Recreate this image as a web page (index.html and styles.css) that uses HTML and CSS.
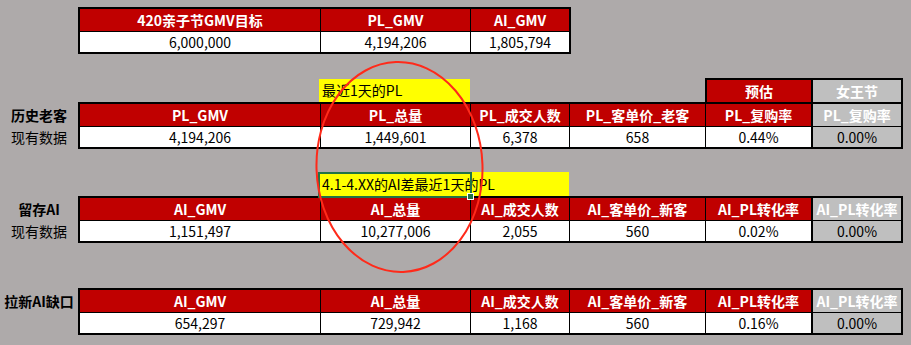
FILE: index.html
```html
<!DOCTYPE html>
<html lang="zh-CN">
<head>
<meta charset="utf-8">
<title>420亲子节GMV</title>
<link rel="stylesheet" href="styles.css">
</head>
<body>
<div class="sheet">
  <section class="block top">
    <div class="tbl t3">
      <div class="h">420亲子节GMV目标</div><div class="h">PL_GMV</div><div class="h">AI_GMV</div>
      <div class="d">6,000,000</div><div class="d">4,194,206</div><div class="d">1,805,794</div>
    </div>
  </section>

  <section class="block b1">
    <div class="notes n-a">
      <div class="sp"></div>
      <div class="note">最近1天的PL</div>
      <div class="sp"></div>
      <div class="tagbox"><div class="tag red">预估</div><div class="tag gray">女王节</div></div>
    </div>
    <div class="row">
      <div class="labels"><div class="lab strong">历史老客</div><div class="lab">现有数据</div></div>
      <div class="tbl t6">
        <div class="h">PL_GMV</div><div class="h">PL_总量</div><div class="h">PL_成交人数</div><div class="h">PL_客单价_老客</div><div class="h">PL_复购率</div><div class="h g">PL_复购率</div>
        <div class="d">4,194,206</div><div class="d">1,449,601</div><div class="d">6,378</div><div class="d">658</div><div class="d">0.44%</div><div class="d g">0.00%</div>
      </div>
    </div>
  </section>

  <section class="block b2">
    <div class="notes n-b">
      <div class="sp"></div>
      <div class="note wide">4.1-4.XX的AI差最近1天的PL<span class="sel"></span><span class="handle"></span></div>
    </div>
    <div class="row">
      <div class="labels"><div class="lab strong">留存AI</div><div class="lab">现有数据</div></div>
      <div class="tbl t6">
        <div class="h">AI_GMV</div><div class="h">AI_总量</div><div class="h">AI_成交人数</div><div class="h">AI_客单价_新客</div><div class="h">AI_PL转化率</div><div class="h g">AI_PL转化率</div>
        <div class="d">1,151,497</div><div class="d">10,277,006</div><div class="d">2,055</div><div class="d">560</div><div class="d">0.02%</div><div class="d g">0.00%</div>
      </div>
    </div>
  </section>

  <section class="block b3">
    <div class="row">
      <div class="labels"><div class="lab strong">拉新AI缺口</div><div class="lab"></div></div>
      <div class="tbl t6">
        <div class="h">AI_GMV</div><div class="h">AI_总量</div><div class="h">AI_成交人数</div><div class="h">AI_客单价_新客</div><div class="h">AI_PL转化率</div><div class="h g">AI_PL转化率</div>
        <div class="d">654,297</div><div class="d">729,942</div><div class="d">1,168</div><div class="d">560</div><div class="d">0.16%</div><div class="d g">0.00%</div>
      </div>
    </div>
  </section>

  <svg class="circle" width="180" height="220" viewBox="310 57 180 220" aria-hidden="true">
    <ellipse cx="399.5" cy="167" rx="83" ry="105" transform="rotate(-2 399.5 167)" fill="none" stroke="#ff2a1a" stroke-width="2"/>
  </svg>
</div>
</body>
</html>
```

FILE: styles.css
```css
* { box-sizing: border-box; }
html, body { margin: 0; padding: 0; }
body {
  background: #aeaaaa;
  font-family: "Noto Sans CJK SC", "Noto Sans", sans-serif;
  font-size: 14px;
  color: #000;
  width: 911px;
  height: 345px;
  overflow: hidden;
}
.sheet {
  position: relative;
  padding-top: 7px;
}
.block { display: block; }
.top { padding-left: 78px; }
.b1 { margin-top: 24px; }
.b2 { margin-top: 23px; }
.b3 { margin-top: 45px; }

.row { display: flex; }
.labels {
  width: 78px;
  display: flex;
  flex-direction: column;
  padding-top: 2px;
}
.lab {
  height: 22px;
  line-height: 22px;
  text-align: center;
  white-space: nowrap;
}
.lab + .lab { height: 20px; line-height: 20px; margin-top: 1px; }
.lab.strong { font-weight: 700; }

.tbl {
  display: grid;
  gap: 1px;
  background: #000;
  border: 2px solid #000;
  grid-template-rows: 22px 20px;
}
.t3 { grid-template-columns: 240px 149px 98px; width: 493px; }
.t6 { grid-template-columns: 240px 149px 98px 135px 105px 89px; width: 825px; }
.h, .d {
  display: flex;
  align-items: center;
  justify-content: center;
  white-space: nowrap;
  overflow: hidden;
}
.h {
  background: #c00000;
  color: #fff;
  font-weight: 700;
}
.d { background: #fff; }
.h.g, .d.g { background: #bfbfbf; border-left: 1px solid #000; }

.notes {
  display: grid;
  margin-left: 78px;
  height: 24px;
}
.n-a { grid-template-columns: 241px 151px 235px 198px; }
.n-b { grid-template-columns: 241px 250px; }
.note {
  position: relative;
  background: #ffff00;
  height: 23px;
  margin-top: 1px;
  line-height: 23px;
  padding-left: 3px;
  white-space: nowrap;
}
.n-b .note { height: 24px; margin-top: 0; line-height: 24px; }
.sel {
  position: absolute;
  left: -1px;
  top: 0;
  width: 154px;
  height: 26px;
  border: 2px solid #217346;
}
.handle {
  position: absolute;
  left: 148px;
  top: 21px;
  width: 7px;
  height: 7px;
  background: #217346;
  border: 1px solid #fff;
}
.tagbox {
  display: grid;
  grid-template-columns: 104px 88px;
  gap: 2px;
  background: #000;
  border: 2px solid #000;
  border-bottom: 0;
}
.tag {
  display: flex;
  align-items: center;
  justify-content: center;
  color: #fff;
  font-weight: 700;
}
.tag.red { background: #c00000; }
.tag.gray { background: #bfbfbf; }

.circle {
  position: absolute;
  left: 310px;
  top: 57px;
  pointer-events: none;
}
```
